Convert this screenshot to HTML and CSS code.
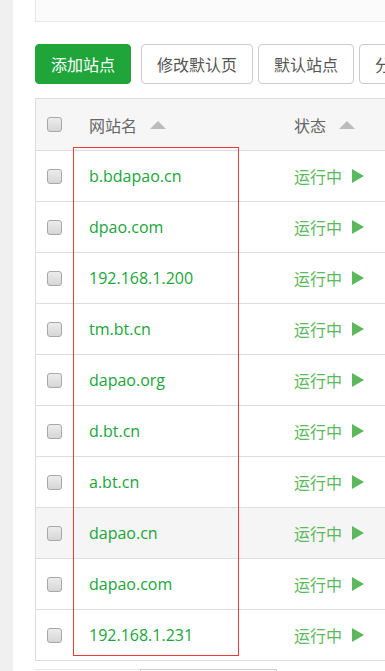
FILE: index.html
```html
<!DOCTYPE html>
<html lang="zh-CN">
<head>
    <meta charset="UTF-8">
    <meta name="viewport" content="width=device-width, initial-scale=1.0">
    <title>网站管理</title>
    <link rel="stylesheet" href="styles.css">
</head>
<body>
    <div class="page">
        <div class="side"></div>
        <div class="main">
            <div class="topbox"></div>

            <div class="toolbar">
                <button class="btn btn-green">添加站点</button>
                <button class="btn">修改默认页</button>
                <button class="btn">默认站点</button>
                <button class="btn">分类管理</button>
            </div>

            <div class="table-wrap">
                <div class="row head">
                    <div class="cell check"><span class="box"></span></div>
                    <div class="cell name">网站名 <span class="sort"></span></div>
                    <div class="cell status">状态 <span class="sort"></span></div>
                </div>
                <div class="row">
                    <div class="cell check"><span class="box"></span></div>
                    <div class="cell name site">b.bdapao.cn</div>
                    <div class="cell status run">运行中 <span class="play"></span></div>
                </div>
                <div class="row">
                    <div class="cell check"><span class="box"></span></div>
                    <div class="cell name site">dpao.com</div>
                    <div class="cell status run">运行中 <span class="play"></span></div>
                </div>
                <div class="row">
                    <div class="cell check"><span class="box"></span></div>
                    <div class="cell name site">192.168.1.200</div>
                    <div class="cell status run">运行中 <span class="play"></span></div>
                </div>
                <div class="row">
                    <div class="cell check"><span class="box"></span></div>
                    <div class="cell name site">tm.bt.cn</div>
                    <div class="cell status run">运行中 <span class="play"></span></div>
                </div>
                <div class="row">
                    <div class="cell check"><span class="box"></span></div>
                    <div class="cell name site">dapao.org</div>
                    <div class="cell status run">运行中 <span class="play"></span></div>
                </div>
                <div class="row">
                    <div class="cell check"><span class="box"></span></div>
                    <div class="cell name site">d.bt.cn</div>
                    <div class="cell status run">运行中 <span class="play"></span></div>
                </div>
                <div class="row">
                    <div class="cell check"><span class="box"></span></div>
                    <div class="cell name site">a.bt.cn</div>
                    <div class="cell status run">运行中 <span class="play"></span></div>
                </div>
                <div class="row hover">
                    <div class="cell check"><span class="box"></span></div>
                    <div class="cell name site">dapao.cn</div>
                    <div class="cell status run">运行中 <span class="play"></span></div>
                </div>
                <div class="row">
                    <div class="cell check"><span class="box"></span></div>
                    <div class="cell name site">dapao.com</div>
                    <div class="cell status run">运行中 <span class="play"></span></div>
                </div>
                <div class="row">
                    <div class="cell check"><span class="box"></span></div>
                    <div class="cell name site">192.168.1.231</div>
                    <div class="cell status run">运行中 <span class="play"></span></div>
                </div>

                <div class="mark"></div>
            </div>

            <div class="pager">
                <span class="pg pg-first"></span>
                <span class="pg pg-sel"></span>
            </div>
        </div>
    </div>
</body>
</html>
```

FILE: styles.css
```css
* {
    box-sizing: border-box;
}
body {
    margin: 0;
    background-color: #ffffff;
    font-family: "Open Sans", "Noto Sans CJK SC", sans-serif;
    font-size: 16px;
    color: #555555;
    overflow: hidden;
}
.page {
    display: flex;
    width: 800px;
    height: 671px;
}
.side {
    width: 13px;
    flex: none;
    background-color: #f0f0f0;
}
.main {
    flex: 1;
    padding-left: 22px;
}
.topbox {
    height: 22px;
    background-color: #fbfbfb;
    border-left: 1px solid #e6e6e6;
    border-bottom: 1px solid #e6e6e6;
}
.toolbar {
    display: flex;
    margin-top: 22px;
    gap: 5px;
}
.btn {
    height: 40px;
    padding: 0 15px;
    border: 1px solid #cccccc;
    border-radius: 4px;
    background-color: #ffffff;
    color: #555555;
    font-family: "Noto Sans CJK SC", sans-serif;
    font-size: 16px;
}
.btn-green {
    background-color: #20a53a;
    border-color: #20a53a;
    color: #ffffff;
    margin-right: 5px;
}
.table-wrap {
    position: relative;
    margin-top: 14px;
    border-top: 1px solid #dddddd;
    border-left: 1px solid #dddddd;
}
.row {
    display: flex;
    align-items: center;
    height: 51px;
    border-bottom: 1px solid #dddddd;
}
.row.head {
    height: 52px;
    background-color: #f6f6f6;
    color: #666666;
}
.row.hover {
    background-color: #f5f5f5;
}
.cell {
    display: flex;
    align-items: center;
    flex: none;
}
.check {
    width: 40px;
    padding-left: 11px;
}
.name {
    width: 205px;
    padding-left: 13px;
}
.status {
    padding-left: 13px;
}
.head .cell {
    font-family: "Noto Sans CJK SC", sans-serif;
}
.box {
    display: inline-block;
    width: 15px;
    height: 15px;
    border: 1px solid #a8a8a8;
    border-radius: 3px;
    background: linear-gradient(#ececec, #d6d6d6);
}
.sort {
    display: inline-block;
    width: 0;
    height: 0;
    margin-left: 13px;
    border-left: 8px solid transparent;
    border-right: 8px solid transparent;
    border-bottom: 8px solid #bbbbbb;
}
.site {
    color: #20a53a;
}
.run {
    color: #5cb85c;
    font-family: "Noto Sans CJK SC", sans-serif;
}
.play {
    display: inline-block;
    width: 0;
    height: 0;
    margin-left: 10px;
    border-top: 7px solid transparent;
    border-bottom: 7px solid transparent;
    border-left: 12px solid #5cb85c;
}
.mark {
    position: absolute;
    left: 37px;
    top: 48px;
    width: 166px;
    height: 509px;
    border: 1px solid #f03a3a;
}
.pager {
    display: flex;
    margin-top: 8px;
}
.pg {
    display: inline-block;
    height: 30px;
    border-top: 1px solid #e6e6e6;
}
.pg-first {
    width: 105px;
}
.pg-sel {
    width: 137px;
    border: 1px solid #cccccc;
}
```
